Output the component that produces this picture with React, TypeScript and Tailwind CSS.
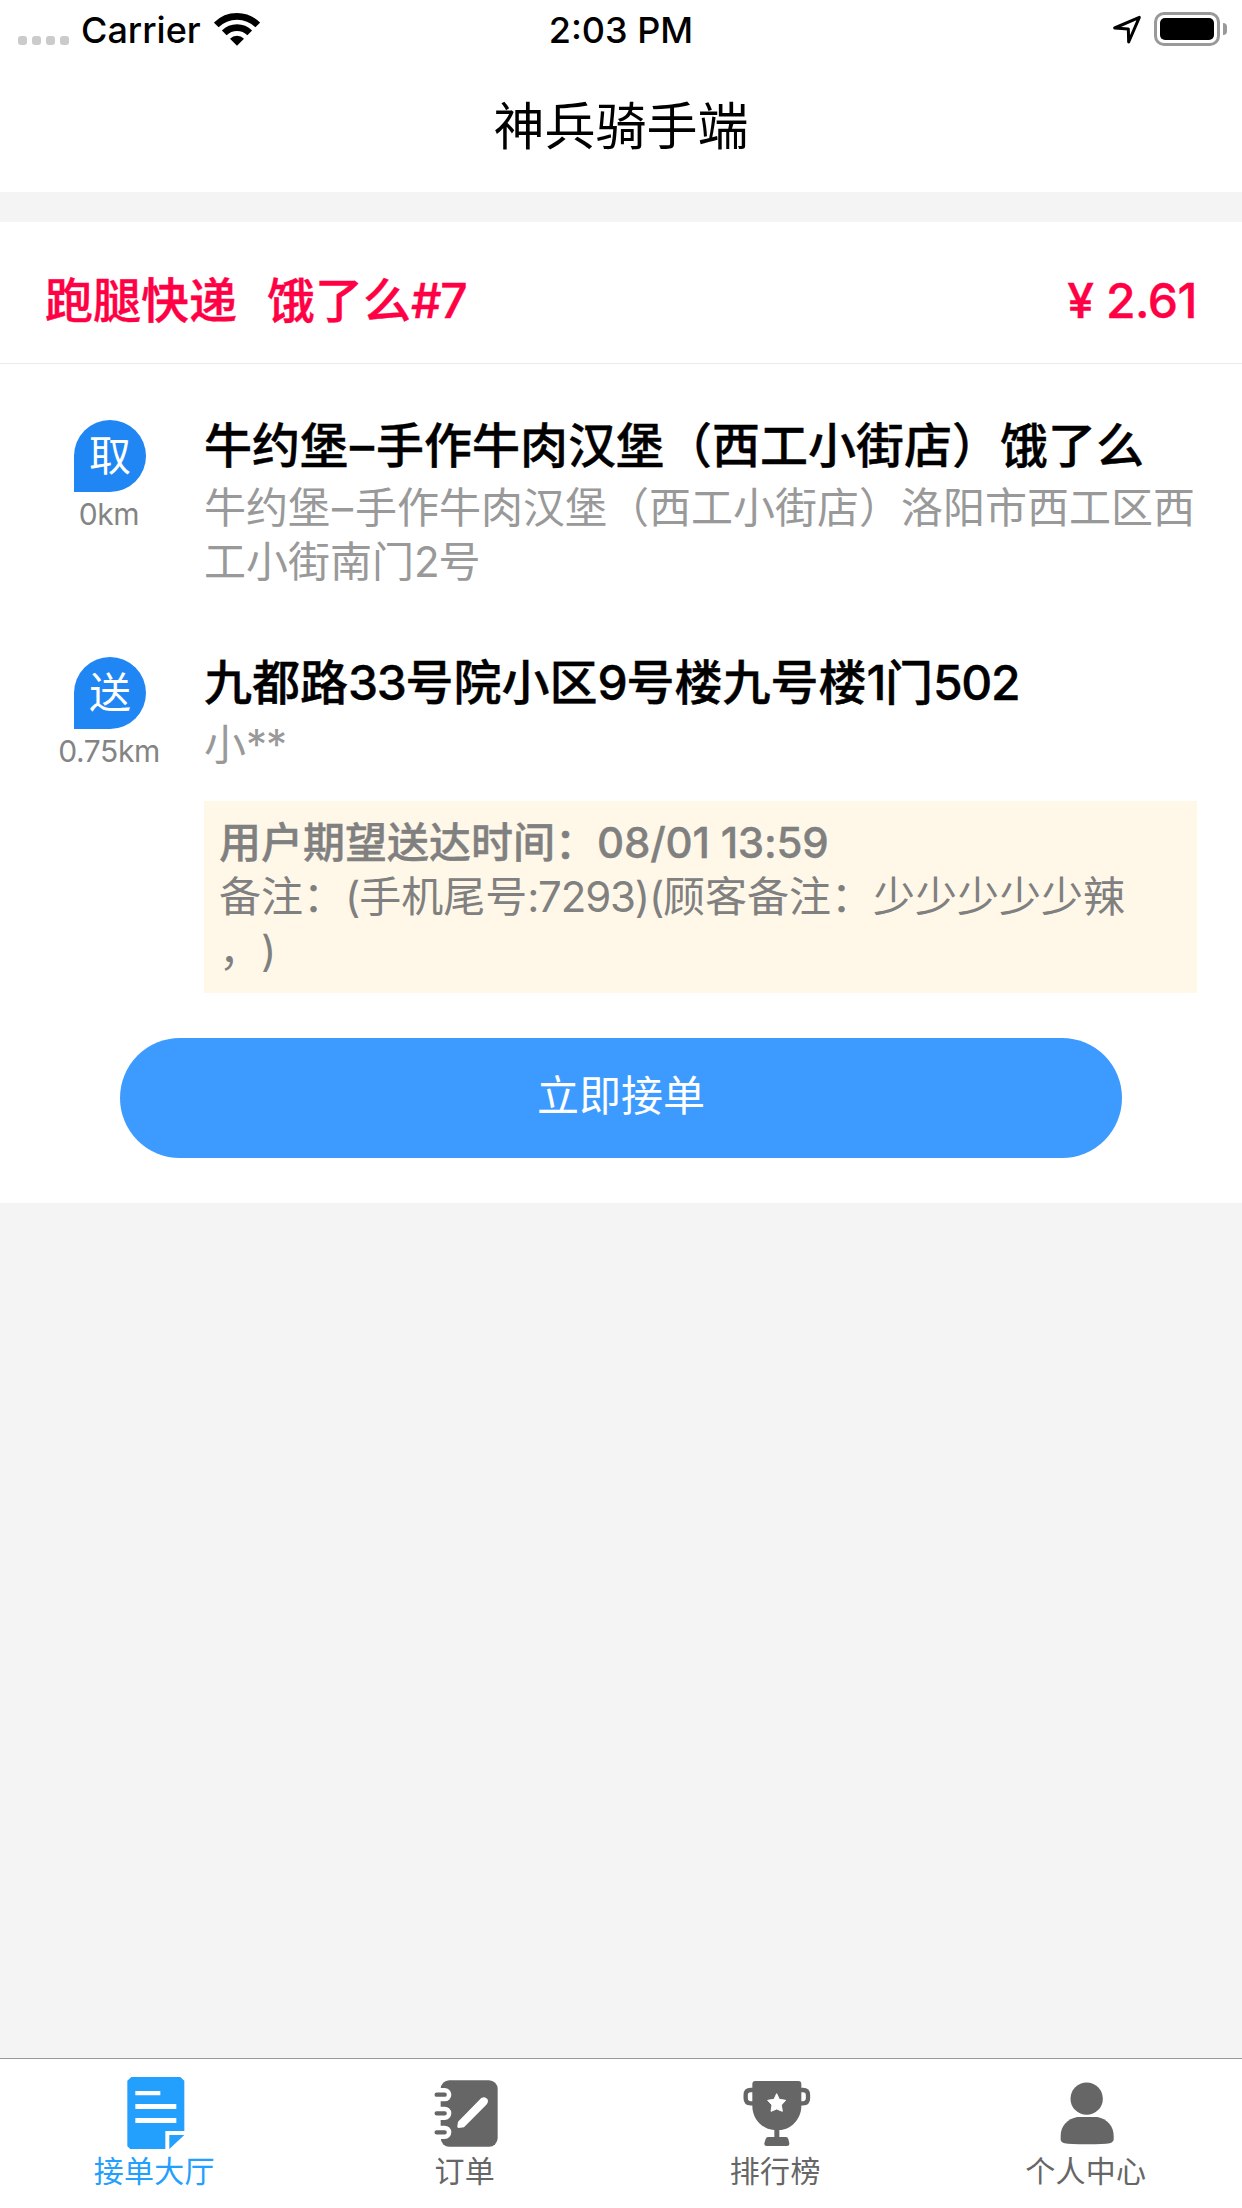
import type { ReactNode } from "react";

interface Stop {
  mark: string;
  distance: string;
  title: string;
  lines: string[];
}

const STOPS: Stop[] = [
  {
    mark: "取",
    distance: "0km",
    title: "牛约堡–手作牛肉汉堡（西工小街店）饿了么",
    lines: ["牛约堡–手作牛肉汉堡（西工小街店）洛阳市西工区西", "工小街南门2号"],
  },
  {
    mark: "送",
    distance: "0.75km",
    title: "九都路33号院小区9号楼九号楼1门502",
    lines: ["小**"],
  },
];

export default function App() {
  return (
    <div className="flex h-[2208px] w-[1242px] flex-col overflow-hidden bg-[#f4f4f4] font-['Inter','Noto_Sans_CJK_SC',sans-serif] text-black">
      <header className="h-[192px] shrink-0 bg-white">
        <StatusBar />
        <h1 className="mt-[35px] text-center text-[51px] leading-[64px]">神兵骑手端</h1>
      </header>
      <main className="flex-1 pt-[30px]">
        <OrderCard />
      </main>
      <TabBar />
    </div>
  );
}

function StatusBar() {
  return (
    <div className="grid h-[60px] grid-cols-3 text-[36px] leading-[60px] font-medium">
      <div className="flex pl-[18px]">
        <div className="mt-9 flex gap-[5px]">
          <i className="size-[9px] rounded-[3px] bg-[#cbcbcb]" />
          <i className="size-[9px] rounded-[3px] bg-[#cbcbcb]" />
          <i className="size-[9px] rounded-[3px] bg-[#cbcbcb]" />
          <i className="size-[9px] rounded-[3px] bg-[#cbcbcb]" />
        </div>
        <span className="ml-[12px] w-[133px] whitespace-nowrap">Carrier</span>
        <svg className="mt-[13px] h-[33px] w-[46px]" viewBox="642 39 138 99">
          <path d="M648.8 74.8a88 88 0 0 1 124.4 0" fill="none" stroke="#000" strokeWidth="20" />
          <path d="M672.8 98.8a54 54 0 0 1 76.4 0" fill="none" stroke="#000" strokeWidth="20" />
          <path d="M711 137l-21-21a30 30 0 0 1 42 0z" />
        </svg>
      </div>
      <div className="text-center whitespace-nowrap">2:03 PM</div>
      <div className="flex justify-end pr-[15px]">
        <svg className="mt-[15px] h-[30px] w-[30px]" viewBox="97 45 90 90">
          <path
            d="M179 52L105 84L146 87L147 126Z"
            fill="none"
            stroke="#000"
            strokeWidth="9"
            strokeLinejoin="round"
          />
        </svg>
        <div className="mt-3 ml-[12px] h-[34px] w-[66px] rounded-[10px] border-3 border-[#999] p-[3px]">
          <div className="h-[22px] rounded-[5px] bg-black" />
        </div>
        <div className="mt-[23px] ml-[3px] h-[12px] w-[4px] rounded-r-full bg-[#999]" />
      </div>
    </div>
  );
}

/* ── Order ── */

// Tightens the latin runs and opens up the dash inside Chinese text.
function Mixed({ text }: { text: string }) {
  return text.split(/([\x20-\x7e]+|–)/).map((part, i) => {
    if (i % 2 === 0) return part;
    return (
      <span key={i} className={part === "–" ? "mx-[2px]" : "tracking-[-0.028em]"}>
        {part}
      </span>
    );
  });
}

function OrderCard() {
  return (
    <section className="h-[981px] bg-white">
      <div className="flex h-[142px] items-center justify-between border-b border-[#ebebeb] px-[45px] pt-[17px] text-[48px] font-medium text-[#ff0044] [-webkit-text-stroke:0.4px]">
        <div className="flex gap-[30px] whitespace-nowrap">
          <span>跑腿快递</span>
          <span>
            <Mixed text="饿了么#7" />
          </span>
        </div>
        <div className="flex gap-[12px]">
          <span>¥</span>
          <span className="tracking-[-0.5px]">2.61</span>
        </div>
      </div>
      <div className="flex flex-col pt-[53px]">
        {STOPS.map((s) => (
          <StopRow key={s.mark} stop={s} />
        ))}
      </div>
      <div className="mr-[45px] ml-[204px] h-[192px] bg-[#fff8e8] px-[15px] pt-[15px] text-[42px] leading-[54px] whitespace-nowrap text-[#808080] [text-spacing-trim:space-all]">
        <p className="font-medium [-webkit-text-stroke:0.4px]">
          用户期望送达时间：<span className="tracking-[-0.2px]">08/01 13:59</span>
        </p>
        <p>
          <Mixed text="备注：(手机尾号:7293)(顾客备注：少少少少少辣" />
        </p>
        <p>
          <Mixed text="，)" />
        </p>
      </div>
      <button className="mx-[120px] mt-[45px] block h-[120px] w-[1002px] rounded-full bg-[#3d9bff] pb-[5px] text-[42px] text-white">
        立即接单
      </button>
    </section>
  );
}

function StopRow({ stop }: { stop: Stop }) {
  return (
    <div className="flex h-[237px] last:h-[147px]">
      <div className="ml-[45px] flex w-[130px] flex-col items-center pt-[3px]">
        <div className="flex size-[72px] items-center justify-center rounded-full rounded-bl-none bg-[#2086f4] text-[42px] leading-[72px] text-white">
          {stop.mark}
        </div>
        <span className="mt-1 mr-[2px] text-[30px] leading-[36px] tracking-[-0.4px] text-[#848484]">{stop.distance}</span>
      </div>
      <div className="ml-[29px] whitespace-nowrap">
        <h2 className="-mt-px text-[48px] leading-[60px] font-medium [-webkit-text-stroke:0.4px]">
          <Mixed text={stop.title} />
        </h2>
        <div className="mt-[5px]">
          {stop.lines.map((line) => (
            <p key={line} className="text-[42px] leading-[54px] text-[#999]">
              <Mixed text={line} />
            </p>
          ))}
        </div>
      </div>
    </div>
  );
}

/* ── Bottom tabs ── */

function TabBar() {
  return (
    <nav className="grid h-[150px] shrink-0 grid-cols-4 border-t border-[#999] bg-white">
      <Tab label="接单大厅" active>
        <svg className="size-[75px]" viewBox="113 75 225 225" fill="#239ffe">
          <path d="M153 81H300L312 92V243H255V297H150L141 289V92Z" />
          <path d="M267 255H312L267 297Z" />
          <path d="M165 123h75v13h-75zM165 162h123v15h-123zM165 204h123v15h-123z" fill="#fff" />
        </svg>
      </Tab>
      <Tab label="订单">
        <svg className="size-[75px]" viewBox="114 75 225 225" fill="#666">
          <rect x="152" y="91" width="171" height="199" rx="26" />
          <path
            d="M128 134H164M128 190H164M128 247H164"
            stroke="#fff"
            strokeWidth="40"
            strokeLinecap="round"
          />
          <path
            d="M140 134H164M140 190H164M140 247H164"
            stroke="#666"
            strokeWidth="13"
            strokeLinecap="round"
          />
          <path d="M204 215L273 145Q284 137 292 147Q297 155 289 164L222 232L206 234Q200 233 202 229Z" fill="#fff" />
        </svg>
      </Tab>
      <Tab label="排行榜">
        <svg className="size-[75px]" viewBox="116 75 225 225" fill="#666">
          <path d="M165 93H294Q303 93 303 102V168C303 209 270 240 237 240V261H257Q262 261 264 267L267 280Q268 288 260 288H199Q191 288 192 280L196 267Q198 261 203 261H222V240C189 240 156 209 156 168V102Q156 93 165 93Z" />
          <path
            d="M160 120H151Q136 120 136 135V145Q136 160 151 160H160M299 120H308Q323 120 323 135V145Q323 160 308 160H299"
            fill="none"
            stroke="#666"
            strokeWidth="13"
          />
          <path
            d="M229 131L237 148L256 151L243 165L246 184L229 177L212 184L215 165L202 151L221 148Z"
            fill="#fff"
            stroke="#fff"
            strokeWidth="3"
            strokeLinejoin="round"
          />
        </svg>
      </Tab>
      <Tab label="个人中心">
        <svg className="size-[75px]" viewBox="118 75 225 225" fill="#666">
          <circle cx="231" cy="146" r="48.5" />
          <path d="M203 201H263C292 206 312 229 312 257V269Q311 276 300 280Q285 283 232 283Q180 283 165 280Q153 276 153 269V257C153 229 173 206 203 201Z" />
        </svg>
      </Tab>
    </nav>
  );
}

function Tab({ label, active, children }: { label: string; active?: boolean; children: ReactNode }) {
  return (
    <div
      className={`flex flex-col items-center pt-4 text-[30px] leading-[42px] tracking-[0.3px] ${
        active ? "text-[#239ffe]" : "text-[#666]"
      }`}
    >
      {children}
      <span className="mr-[2px]">{label}</span>
    </div>
  );
}
